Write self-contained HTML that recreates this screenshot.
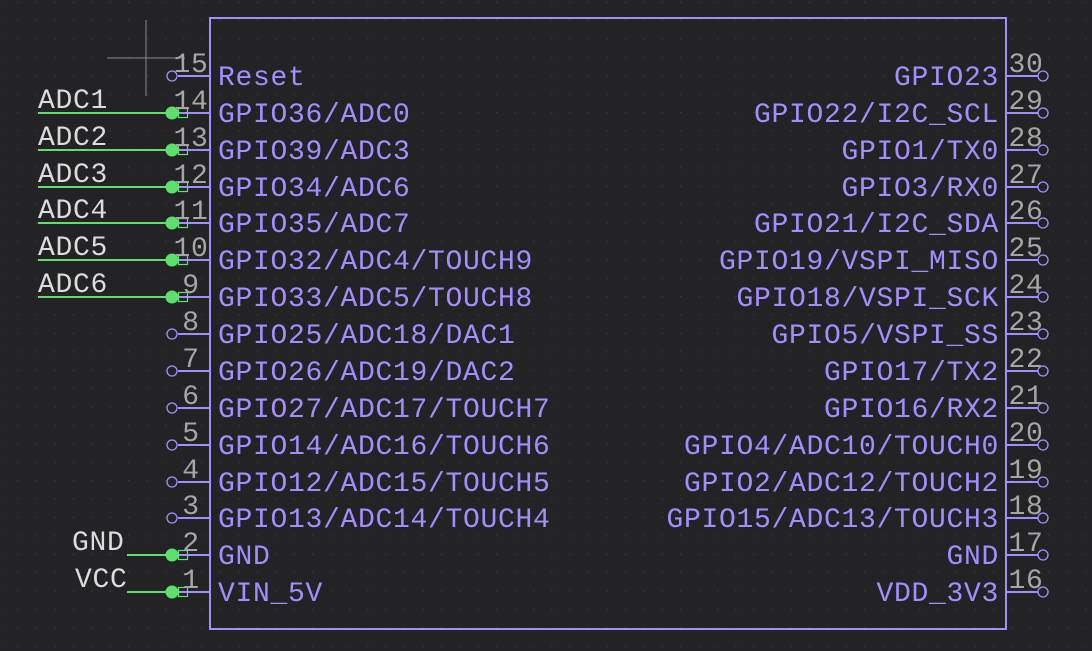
<!DOCTYPE html>
<html><head><meta charset="utf-8"><style>
html,body{margin:0;padding:0;background:#232326;}
svg{display:block}
text{font-family:"Liberation Mono",monospace;font-size:28px;letter-spacing:0.7px}
.l{fill:#a48eff}
.n{fill:#a6a6a6;text-anchor:middle;font-size:29px}
.r{fill:#a48eff;text-anchor:end}
.g{fill:#dcdcdc}
</style></head><body>
<svg width="1092" height="651" viewBox="0 0 1092 651" xmlns="http://www.w3.org/2000/svg">
<defs><pattern id="p" x="17.6" y="20" width="18.4" height="18.4" patternUnits="userSpaceOnUse"><rect width="1.2" height="1.2" fill="#3c3c40"/></pattern></defs>
<rect width="1092" height="651" fill="#232326"/>
<rect width="1092" height="651" fill="url(#p)"/>
<g stroke="#8a8a8a" stroke-width="1"><line x1="146" y1="20" x2="146" y2="96"/><line x1="107" y1="58" x2="185" y2="58"/></g>
<rect x="210" y="18" width="796" height="611" fill="none" stroke="#a48eff" stroke-width="2"/>
<g stroke="#a48eff" stroke-width="2" fill="none">
<path d="M178 76H210M178 113H210M178 150H210M178 187H210M178 223H210M178 260H210M178 297H210M178 334H210M178 371H210M178 408H210M178 445H210M178 482H210M178 518H210M178 555H210M178 592H210"/>
<path d="M1006 76H1038M1006 113H1038M1006 150H1038M1006 187H1038M1006 223H1038M1006 260H1038M1006 297H1038M1006 334H1038M1006 371H1038M1006 408H1038M1006 445H1038M1006 482H1038M1006 518H1038M1006 555H1038M1006 592H1038"/>
</g>
<g stroke="#a48eff" stroke-width="1.3" fill="none">
<circle cx="172" cy="76" r="5"/><circle cx="172" cy="334" r="5"/><circle cx="172" cy="371" r="5"/><circle cx="172" cy="408" r="5"/><circle cx="172" cy="445" r="5"/><circle cx="172" cy="482" r="5"/><circle cx="172" cy="518" r="5"/>
<circle cx="1043" cy="76" r="5"/><circle cx="1043" cy="113" r="5"/><circle cx="1043" cy="150" r="5"/><circle cx="1043" cy="187" r="5"/><circle cx="1043" cy="223" r="5"/><circle cx="1043" cy="260" r="5"/><circle cx="1043" cy="297" r="5"/><circle cx="1043" cy="334" r="5"/><circle cx="1043" cy="371" r="5"/><circle cx="1043" cy="408" r="5"/><circle cx="1043" cy="445" r="5"/><circle cx="1043" cy="482" r="5"/><circle cx="1043" cy="518" r="5"/><circle cx="1043" cy="555" r="5"/><circle cx="1043" cy="592" r="5"/>
</g>
<g stroke="#5ee06e" stroke-width="2" fill="none">
<path d="M38 113H172M38 150H172M38 187H172M38 223H172M38 260H172M38 297H172M127 555H172M127 592H172"/>
</g>
<g stroke="#5ee06e" stroke-width="1.2" fill="none">
<rect x="178.5" y="108.5" width="9" height="9"/><rect x="178.5" y="145.5" width="9" height="9"/><rect x="178.5" y="182.5" width="9" height="9"/><rect x="178.5" y="218.5" width="9" height="9"/><rect x="178.5" y="255.5" width="9" height="9"/><rect x="178.5" y="292.5" width="9" height="9"/><rect x="178.5" y="550.5" width="9" height="9"/><rect x="178.5" y="587.5" width="9" height="9"/>
</g>
<g fill="#5ee06e">
<circle cx="172" cy="113" r="6.5"/><circle cx="172" cy="150" r="6.5"/><circle cx="172" cy="187" r="6.5"/><circle cx="172" cy="223" r="6.5"/><circle cx="172" cy="260" r="6.5"/><circle cx="172" cy="297" r="6.5"/><circle cx="172" cy="555" r="6.5"/><circle cx="172" cy="592" r="6.5"/>
</g>
<g class="g">
<text x="38" y="108">ADC1</text><text x="38" y="145">ADC2</text><text x="38" y="182">ADC3</text><text x="38" y="218">ADC4</text><text x="38" y="255">ADC5</text><text x="38" y="292">ADC6</text>
<text x="72" y="550">GND</text><text x="75" y="587">VCC</text>
</g>
<g class="n">
<text x="191" y="72">15</text><text x="191" y="109">14</text><text x="191" y="146">13</text><text x="191" y="183">12</text><text x="191" y="219">11</text><text x="191" y="256">10</text><text x="191" y="293">9</text><text x="191" y="330">8</text><text x="191" y="367">7</text><text x="191" y="404">6</text><text x="191" y="441">5</text><text x="191" y="478">4</text><text x="191" y="514">3</text><text x="191" y="551">2</text><text x="191" y="588">1</text>
<text x="1026" y="72">30</text><text x="1026" y="109">29</text><text x="1026" y="146">28</text><text x="1026" y="183">27</text><text x="1026" y="219">26</text><text x="1026" y="256">25</text><text x="1026" y="293">24</text><text x="1026" y="330">23</text><text x="1026" y="367">22</text><text x="1026" y="404">21</text><text x="1026" y="441">20</text><text x="1026" y="478">19</text><text x="1026" y="514">18</text><text x="1026" y="551">17</text><text x="1026" y="588">16</text>
</g>
<g class="l">
<text x="218" y="85">Reset</text><text x="218" y="122">GPIO36/ADC0</text><text x="218" y="159">GPIO39/ADC3</text><text x="218" y="196">GPIO34/ADC6</text><text x="218" y="232">GPIO35/ADC7</text><text x="218" y="269">GPIO32/ADC4/TOUCH9</text><text x="218" y="306">GPIO33/ADC5/TOUCH8</text><text x="218" y="343">GPIO25/ADC18/DAC1</text><text x="218" y="380">GPIO26/ADC19/DAC2</text><text x="218" y="417">GPIO27/ADC17/TOUCH7</text><text x="218" y="454">GPIO14/ADC16/TOUCH6</text><text x="218" y="491">GPIO12/ADC15/TOUCH5</text><text x="218" y="527">GPIO13/ADC14/TOUCH4</text><text x="218" y="564">GND</text><text x="218" y="601">VIN_5V</text>
</g>
<g class="r">
<text x="999" y="85">GPIO23</text><text x="999" y="122">GPIO22/I2C_SCL</text><text x="999" y="159">GPIO1/TX0</text><text x="999" y="196">GPIO3/RX0</text><text x="999" y="232">GPIO21/I2C_SDA</text><text x="999" y="269">GPIO19/VSPI_MISO</text><text x="999" y="306">GPIO18/VSPI_SCK</text><text x="999" y="343">GPIO5/VSPI_SS</text><text x="999" y="380">GPIO17/TX2</text><text x="999" y="417">GPIO16/RX2</text><text x="999" y="454">GPIO4/ADC10/TOUCH0</text><text x="999" y="491">GPIO2/ADC12/TOUCH2</text><text x="999" y="527">GPIO15/ADC13/TOUCH3</text><text x="999" y="564">GND</text><text x="999" y="601">VDD_3V3</text>
</g>
</svg>
</body></html>
